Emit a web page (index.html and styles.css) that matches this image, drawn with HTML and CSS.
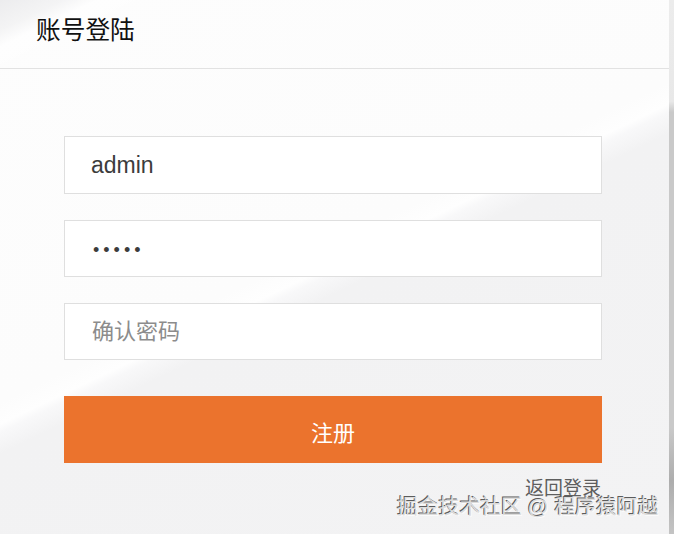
FILE: index.html
```html
<!DOCTYPE html>
<html>
<head>
	<meta charset="utf-8">
	<title>账号登陆</title>
	<link rel="stylesheet" href="styles.css">
</head>
<body>
	<div class="panel">
		<div class="boxTop">账号登陆</div>
		<form class="boxForm">
			<input class="field" type="text" value="admin">
			<input class="field secret" type="password" value="admin">
			<input class="field confirm" type="password" placeholder="确认密码">
			<button class="submit" type="button">注册</button>
			<div class="back"><a href="#">返回登录</a></div>
		</form>
	</div>
	<div class="edge"></div>
	<div class="mark">掘金技术社区 @ 程序猿阿越</div>
</body>
</html>
```

FILE: styles.css
```css
*{
	margin: 0px;
	padding: 0px;
	box-sizing: border-box;
}
html,body{
	height: 534px;
	overflow: hidden;
}
body{
	display: flex;
	position: relative;
	font-family: "Liberation Sans", "Noto Sans CJK SC", sans-serif;
	background-color: #f3f3f4;
	background-image:
		linear-gradient(154.4deg, rgba(234,234,236,0.9) 0%, rgba(240,240,241,0.7) 3.5%, rgba(255,255,255,0.6) 5.5%, rgba(252,252,252,0) 9%),
		linear-gradient(154.4deg, #fdfdfd 0%, #fcfcfc 47%, #fefefe 49.5%, #f8f8f9 50.5%, #f2f2f3 53%, #f3f3f4 100%);
}
.panel{
	flex: 1;
}
.boxTop{
	height: 69px;
	line-height: 62px;
	padding-left: 36px;
	font-size: 24.7px;
	color: #111;
	border-bottom: 1px solid #e2e2e2;
}
.boxForm{
	display: flex;
	flex-direction: column;
	width: 538px;
	margin: 67px 0px 0px 64px;
}
.field{
	height: 57px;
	margin-bottom: 26px;
	padding: 1px 0px 0px 26px;
	font-family: inherit;
	font-size: 23px;
	color: #3c3c3c;
	background-color: #fff;
	border: 1px solid #dfdfdf;
	outline: none;
}
.field:first-child{
	height: 58px;
}
.secret{
	padding: 3px 0px 0px 28px;
	font-size: 18px;
	letter-spacing: 4px;
}
.confirm{
	padding: 0px 0px 1px 27px;
}
.field::placeholder{
	color: #8c8c8c;
	font-size: 22px;
}
.submit{
	height: 67px;
	margin-top: 10px;
	padding-top: 3px;
	font-family: inherit;
	font-size: 22px;
	color: #fff;
	background-color: #eb732d;
	border: none;
}
.back{
	margin-top: 14px;
	padding-right: 1px;
	text-align: right;
	font-size: 19px;
	line-height: 24px;
}
.back a{
	text-decoration: none;
	color: #5e5e5e;
}
.edge{
	width: 5px;
	background-image: linear-gradient(180deg, #ececec 0%, #e8e8e8 19%, #c9c9c9 21%, #c9c9c9 80%, #adadad 90%, #c4c4c4 100%);
}
.mark{
	position: absolute;
	left: 397px;
	top: 492px;
	font-size: 20.8px;
	line-height: 30px;
	white-space: nowrap;
	color: #dcdcdc;
	text-shadow: -1px -1px 0px #5c5c5c, 1px 1px 0px rgba(255,255,255,0.7);
}
```
